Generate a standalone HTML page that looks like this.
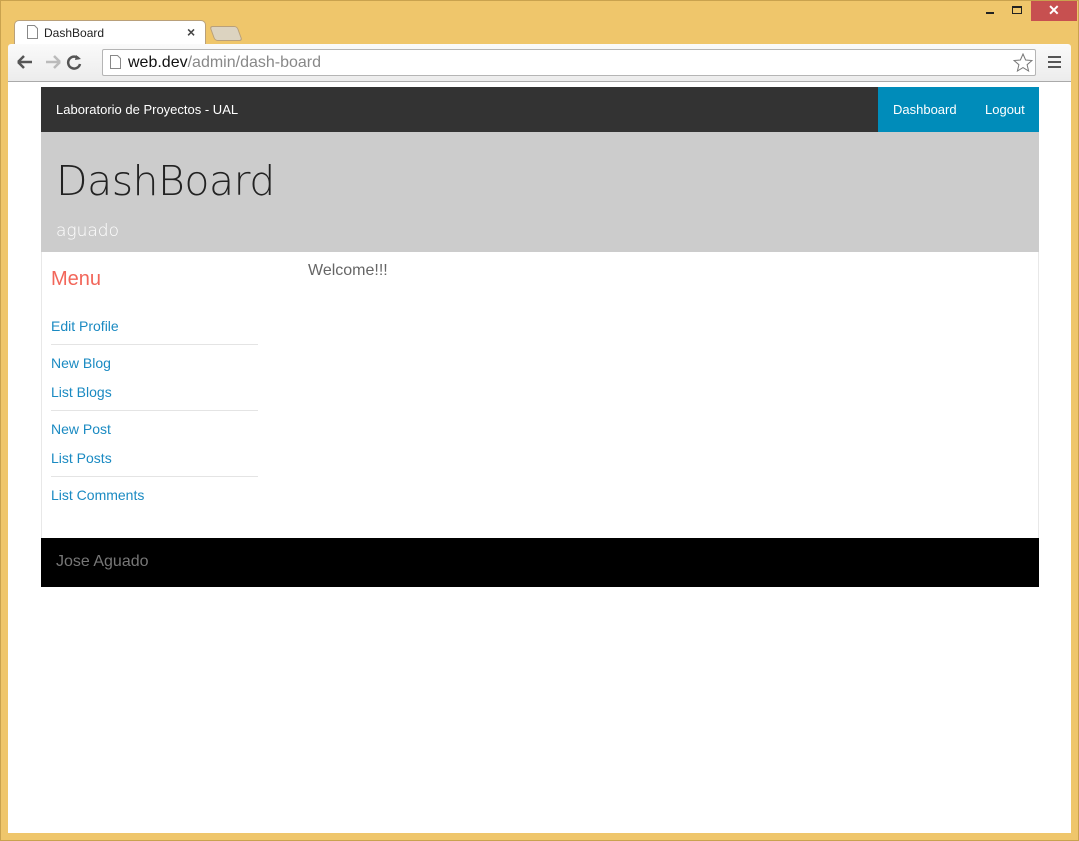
<!DOCTYPE html>
<html><head><meta charset="utf-8"><style>
*{margin:0;padding:0;box-sizing:border-box}
body{width:1079px;height:841px;background:#efc66b;position:relative;overflow:hidden;font-family:"Liberation Sans",sans-serif}
.frame{position:absolute;left:0;top:0;width:1079px;height:841px;border:1px solid #c9a24e}
.tab{position:absolute;left:14px;top:20px;width:192px;height:26px;background:#fff;border:1px solid #b9a07a;border-bottom:none;border-radius:5px 5px 0 0}
.tabtxt{position:absolute;left:44px;top:26px;font-size:12px;color:#222}
.tabx{position:absolute;left:187px;top:24px;font-size:14px;color:#444;font-weight:bold}
.newtab{position:absolute;left:212px;top:26px;width:28px;height:15px;background:#dcd3c0;border:1px solid #b9a07a;border-radius:3px;transform:skewX(20deg)}
.toolbar{position:absolute;left:8px;top:44px;width:1063px;height:38px;background:linear-gradient(#fafafa,#ececec);border-bottom:1px solid #aaa;border-radius:3px 3px 0 0}
.omni{position:absolute;left:102px;top:49px;width:934px;height:27px;background:#fff;border:1px solid #b5b5b5;border-radius:2px}
.url{position:absolute;left:128px;top:54px;font-size:16px;color:#888}
.url b{font-weight:normal;color:#111}
.content{position:absolute;left:8px;top:82px;width:1063px;height:751px;background:#fff}
.nav{position:absolute;left:41px;top:87px;width:998px;height:45px;background:#333}
.brand{position:absolute;left:15px;top:15px;color:#fff;font-size:13px}
.navr{position:absolute;right:0;top:0;height:45px;width:161px;background:#008cba;color:#fff;font-size:13px}
.navr span{position:absolute;top:15px}
.hero{position:absolute;left:41px;top:132px;width:998px;height:120px;background:#ccc}
.hero h1{position:absolute;left:15px;top:25px;font-family:"DejaVu Sans",sans-serif;font-weight:200;font-size:41px;color:#222;letter-spacing:-0.5px}
.hero p{position:absolute;left:15px;top:89px;font-family:"DejaVu Sans",sans-serif;font-weight:200;font-size:17px;color:#fff}
.main{position:absolute;left:41px;top:252px;width:998px;height:286px;border-left:1px solid #e8e8e8;border-right:1px solid #e8e8e8}
.menu{position:absolute;left:51px;top:268px;font-size:20px;color:#f2665a}
.lk{position:absolute;left:51px;font-size:14px;color:#1a8ac2}
.hr{position:absolute;left:51px;width:207px;height:1px;background:#e4e4e4}
.welcome{position:absolute;left:308px;top:262px;font-size:16px;color:#666}
.foot{position:absolute;left:41px;top:538px;width:998px;height:49px;background:#000}
.foot span{position:absolute;left:15px;top:15px;font-size:16px;color:#777}
</style></head><body>
<div class="frame"></div>
<div style="position:absolute;left:1031px;top:1px;width:46px;height:20px;background:#c75050"></div>
<div style="position:absolute;left:1048px;top:2px;color:#fff;font-size:14px;font-weight:bold">✕</div>
<div style="position:absolute;left:986px;top:12px;width:8px;height:2px;background:#222"></div>
<div style="position:absolute;left:1012px;top:6px;width:10px;height:8px;border:1px solid #222;border-top-width:2px"></div>
<div class="tab"></div>
<svg style="position:absolute;left:27px;top:25px" width="11" height="14"><path d="M.5 .5h7l3 3v10H.5z" fill="#fff" stroke="#888"/></svg>
<div class="tabtxt">DashBoard</div><div class="tabx">×</div>
<div class="newtab"></div>
<div class="toolbar"></div>
<svg style="position:absolute;left:16px;top:54px" width="70" height="16">
<path d="M2 8h14M2 8l6-6M2 8l6 6" stroke="#555" stroke-width="2.5" fill="none"/>
<path d="M30 8h14M44 8l-6-6M44 8l-6 6" stroke="#bbb" stroke-width="2.5" fill="none"/>
<path d="M73 5a6 6 0 1 0 1 5" stroke="#555" stroke-width="2.5" fill="none" transform="translate(-10 0)"/>
<path d="M60 1l5 4-6 1z" fill="#555"/>
</svg>
<div class="omni"></div>
<svg style="position:absolute;left:110px;top:55px" width="11" height="14"><path d="M.5 .5h7l3 3v10H.5z" fill="#fff" stroke="#888"/></svg>
<div class="url"><b>web.dev</b>/admin/dash-board</div>
<svg style="position:absolute;left:1013px;top:53px" width="20" height="19"><path d="M10 1l2.6 6 6.4.5-4.9 4.2 1.5 6.3L10 14.6 4.4 18l1.5-6.3L1 7.5 7.4 7z" fill="#fff" stroke="#777"/></svg>
<div style="position:absolute;left:1048px;top:56px;width:13px;height:2px;background:#555;box-shadow:0 5px #555,0 10px #555"></div>
<div class="content"></div>
<div class="nav"><div class="brand">Laboratorio de Proyectos - UAL</div>
<div class="navr"><span style="left:15px">Dashboard</span><span style="left:107px">Logout</span></div></div>
<div class="hero"><h1>DashBoard</h1><p>aguado</p></div>
<div class="main"></div>
<div class="menu">Menu</div>
<div class="lk" style="top:318px">Edit Profile</div>
<div class="hr" style="top:344px"></div>
<div class="lk" style="top:355px">New Blog</div>
<div class="lk" style="top:384px">List Blogs</div>
<div class="hr" style="top:410px"></div>
<div class="lk" style="top:421px">New Post</div>
<div class="lk" style="top:450px">List Posts</div>
<div class="hr" style="top:476px"></div>
<div class="lk" style="top:487px">List Comments</div>
<div class="welcome">Welcome!!!</div>
<div class="foot"><span>Jose Aguado</span></div>
</body></html>
